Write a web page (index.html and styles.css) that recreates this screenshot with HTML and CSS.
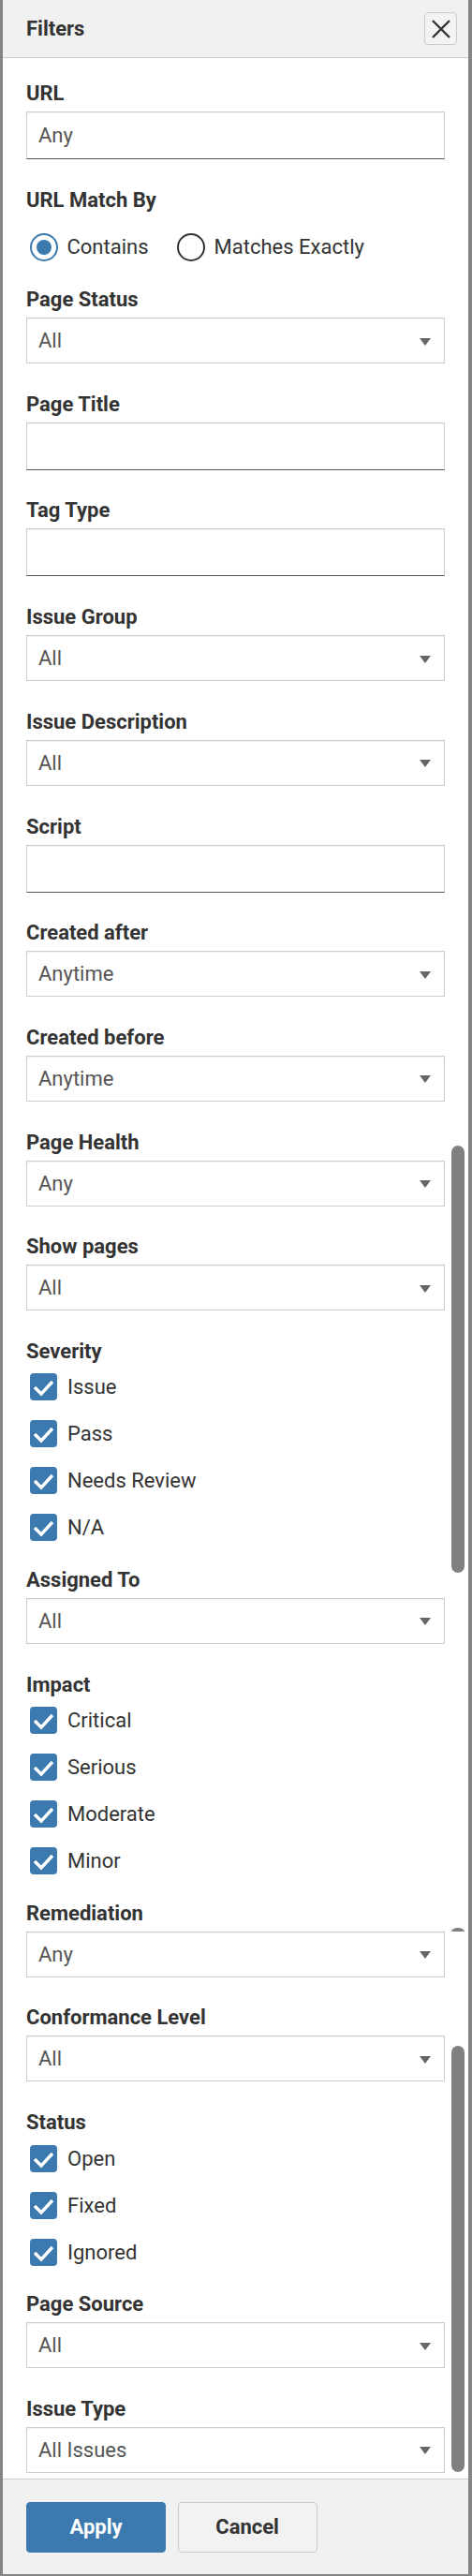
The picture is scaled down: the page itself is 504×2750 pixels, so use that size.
FILE: index.html
```html
<!DOCTYPE html>
<html lang="en">
<head>
  <meta charset="UTF-8">
  <title>Filters</title>
  <link rel="stylesheet" href="styles.css">
</head>
<body>

  <div class="modal">
    <div class="modal-header">
      <h2>Filters</h2>
      <button type="button" class="close-btn" aria-label="Close">
        <svg width="20" height="20" viewBox="0 0 20 20"><path d="M1 1 L19 19 M19 1 L1 19" stroke="#333" stroke-width="2.4" fill="none"/></svg>
      </button>
    </div>

    <div class="modal-body">
      <!-- scrollbar thumbs drawn over the right padding -->
      <div class="thumb thumb-a"></div>
      <div class="thumb-cap"></div>
      <div class="thumb thumb-b"></div>

      <div class="field">
        <label class="field-label" for="url">URL</label>
        <input type="text" id="url" class="text-input" value="Any">
      </div>

      <div class="field radios">
        <span class="field-label">URL Match By</span>
        <div class="radio-row">
          <label class="option"><span class="radio on"></span>Contains</label>
          <label class="option"><span class="radio"></span>Matches Exactly</label>
        </div>
      </div>

      <div class="field">
        <label class="field-label">Page Status</label>
        <div class="select-wrap"><select><option>All</option></select></div>
      </div>

      <div class="field">
        <label class="field-label">Page Title</label>
        <input type="text" class="text-input">
      </div>

      <div class="field">
        <label class="field-label">Tag Type</label>
        <input type="text" class="text-input">
      </div>

      <div class="field">
        <label class="field-label">Issue Group</label>
        <div class="select-wrap"><select><option>All</option></select></div>
      </div>

      <div class="field">
        <label class="field-label">Issue Description</label>
        <div class="select-wrap"><select><option>All</option></select></div>
      </div>

      <div class="field">
        <label class="field-label">Script</label>
        <input type="text" class="text-input">
      </div>

      <div class="field">
        <label class="field-label">Created after</label>
        <div class="select-wrap"><select><option>Anytime</option></select></div>
      </div>

      <div class="field">
        <label class="field-label">Created before</label>
        <div class="select-wrap"><select><option>Anytime</option></select></div>
      </div>

      <div class="field">
        <label class="field-label">Page Health</label>
        <div class="select-wrap"><select><option>Any</option></select></div>
      </div>

      <div class="field">
        <label class="field-label">Show pages</label>
        <div class="select-wrap"><select><option>All</option></select></div>
      </div>

      <div class="field checks">
        <span class="field-label">Severity</span>
        <div class="check"><span class="box"><svg width="29" height="29" viewBox="0 0 29 29"><path d="M5 15 L12 22 L24 9" stroke="#fff" stroke-width="3.4" fill="none"/></svg></span>Issue</div>
        <div class="check"><span class="box"><svg width="29" height="29" viewBox="0 0 29 29"><path d="M5 15 L12 22 L24 9" stroke="#fff" stroke-width="3.4" fill="none"/></svg></span>Pass</div>
        <div class="check"><span class="box"><svg width="29" height="29" viewBox="0 0 29 29"><path d="M5 15 L12 22 L24 9" stroke="#fff" stroke-width="3.4" fill="none"/></svg></span>Needs Review</div>
        <div class="check"><span class="box"><svg width="29" height="29" viewBox="0 0 29 29"><path d="M5 15 L12 22 L24 9" stroke="#fff" stroke-width="3.4" fill="none"/></svg></span>N/A</div>
      </div>

      <div class="field">
        <label class="field-label">Assigned To</label>
        <div class="select-wrap"><select><option>All</option></select></div>
      </div>

      <div class="field checks">
        <span class="field-label">Impact</span>
        <div class="check"><span class="box"><svg width="29" height="29" viewBox="0 0 29 29"><path d="M5 15 L12 22 L24 9" stroke="#fff" stroke-width="3.4" fill="none"/></svg></span>Critical</div>
        <div class="check"><span class="box"><svg width="29" height="29" viewBox="0 0 29 29"><path d="M5 15 L12 22 L24 9" stroke="#fff" stroke-width="3.4" fill="none"/></svg></span>Serious</div>
        <div class="check"><span class="box"><svg width="29" height="29" viewBox="0 0 29 29"><path d="M5 15 L12 22 L24 9" stroke="#fff" stroke-width="3.4" fill="none"/></svg></span>Moderate</div>
        <div class="check"><span class="box"><svg width="29" height="29" viewBox="0 0 29 29"><path d="M5 15 L12 22 L24 9" stroke="#fff" stroke-width="3.4" fill="none"/></svg></span>Minor</div>
      </div>

      <div class="field">
        <label class="field-label">Remediation</label>
        <div class="select-wrap"><select><option>Any</option></select></div>
      </div>

      <div class="field">
        <label class="field-label">Conformance Level</label>
        <div class="select-wrap"><select><option>All</option></select></div>
      </div>

      <div class="field checks">
        <span class="field-label">Status</span>
        <div class="check"><span class="box"><svg width="29" height="29" viewBox="0 0 29 29"><path d="M5 15 L12 22 L24 9" stroke="#fff" stroke-width="3.4" fill="none"/></svg></span>Open</div>
        <div class="check"><span class="box"><svg width="29" height="29" viewBox="0 0 29 29"><path d="M5 15 L12 22 L24 9" stroke="#fff" stroke-width="3.4" fill="none"/></svg></span>Fixed</div>
        <div class="check"><span class="box"><svg width="29" height="29" viewBox="0 0 29 29"><path d="M5 15 L12 22 L24 9" stroke="#fff" stroke-width="3.4" fill="none"/></svg></span>Ignored</div>
      </div>

      <div class="field">
        <label class="field-label">Page Source</label>
        <div class="select-wrap"><select><option>All</option></select></div>
      </div>

      <div class="field last">
        <label class="field-label">Issue Type</label>
        <div class="select-wrap"><select><option>All Issues</option></select></div>
      </div>
    </div>

    <div class="modal-footer">
      <button type="button" class="btn btn-primary">Apply</button>
      <button type="button" class="btn btn-default">Cancel</button>
    </div>
  </div>

</body>
</html>
```

FILE: styles.css
```css
* {
  box-sizing: border-box;
}

body {
  margin: 0;
  background: #858585;
  font-family: Roboto, "Liberation Sans", Arial, sans-serif;
  color: #333;
}

.modal {
  width: 497px;
  margin-left: 3px;
  background: #fff;
}

.modal-header {
  height: 62px;
  display: flex;
  align-items: center;
  justify-content: space-between;
  padding: 0 12px 0 25px;
  background: #f1f1f1;
  border-bottom: 1px solid #ccc;
}

.modal-header h2 {
  margin: 0;
  font-size: 22px;
  font-weight: 700;
}

.close-btn {
  width: 35px;
  height: 35px;
  padding: 0;
  border: 1px solid #ccc;
  border-radius: 4px;
  background: #f3f3f3;
  display: flex;
  align-items: center;
  justify-content: center;
}

.modal-body {
  position: relative;
  padding: 25px 25px 6px;
}

.field {
  margin-bottom: 30.7px;
}

.field.last {
  margin-bottom: 0;
}

.field-label {
  display: block;
  font-size: 22px;
  font-weight: 700;
  line-height: 26px;
  margin-bottom: 6px;
}

.text-input {
  display: block;
  width: 100%;
  height: 51px;
  padding: 0 12px;
  border: 1px solid #ccc;
  border-bottom-color: #555;
  border-radius: 0;
  box-shadow: inset 0 1px 1px rgba(0, 0, 0, 0.06);
  font-family: inherit;
  font-size: 22px;
  color: #555;
  background: #fff;
}

.select-wrap {
  position: relative;
}

.select-wrap select {
  appearance: none;
  -webkit-appearance: none;
  display: block;
  width: 100%;
  height: 49px;
  padding: 0 40px 0 12px;
  border: 1px solid #ccc;
  border-radius: 0;
  box-shadow: inset 0 1px 1px rgba(0, 0, 0, 0.06);
  font-family: inherit;
  font-size: 22px;
  color: #555;
  background: #fff;
}

.select-wrap::after {
  content: "";
  position: absolute;
  right: 15px;
  top: 50%;
  margin-top: -3px;
  border-left: 6px solid transparent;
  border-right: 6px solid transparent;
  border-top: 8px solid #666;
  pointer-events: none;
}

/* radio group */
.field.radios {
  margin-bottom: 18.4px;
}

.radio-row {
  display: flex;
  align-items: center;
  gap: 30px;
  height: 50px;
  margin-top: 12px;
  padding-left: 3.5px;
}

.option {
  display: flex;
  align-items: center;
  gap: 10px;
  font-size: 22px;
}

.radio {
  width: 30px;
  height: 30px;
  border: 2.7px solid #333;
  border-radius: 50%;
  display: flex;
  align-items: center;
  justify-content: center;
}

.radio.on {
  border-color: #3c79ae;
}

.radio.on::after {
  content: "";
  width: 16px;
  height: 16px;
  border-radius: 50%;
  background: #3c79ae;
}

/* checkbox groups */
.field.checks {
  margin-bottom: 18px;
}

.field.checks .field-label {
  margin-bottom: 0;
}

.check {
  height: 50px;
  display: flex;
  align-items: center;
  gap: 11px;
  padding-left: 4px;
  font-size: 22px;
}

.box {
  width: 29px;
  height: 29px;
  border-radius: 4px;
  background: #3c79ae;
  display: flex;
}

/* scrollbar thumbs */
.thumb {
  position: absolute;
  right: 4px;
  width: 14px;
  border-radius: 7px;
  background: #808080;
}

.thumb-a {
  top: 1161px;
  height: 456px;
}

.thumb-b {
  top: 2122px;
  height: 455px;
}

.thumb-cap {
  position: absolute;
  right: 4px;
  top: 1996px;
  width: 14px;
  height: 4px;
  border-radius: 7px 7px 0 0 / 4px 4px 0 0;
  background: #808080;
}

.modal-footer {
  display: flex;
  gap: 12.6px;
  padding: 24px 25px 23px;
  background: #f1f1f1;
  border-top: 1px solid #ccc;
}

.btn {
  width: 149px;
  height: 54px;
  border-radius: 4px;
  font-family: inherit;
  font-size: 22px;
  font-weight: 700;
}

.btn-primary {
  background: #3c79ae;
  border: 1px solid #3c79ae;
  color: #fff;
}

.btn-default {
  background: #f2f2f2;
  border: 1px solid #ccc;
  color: #333;
}
```
